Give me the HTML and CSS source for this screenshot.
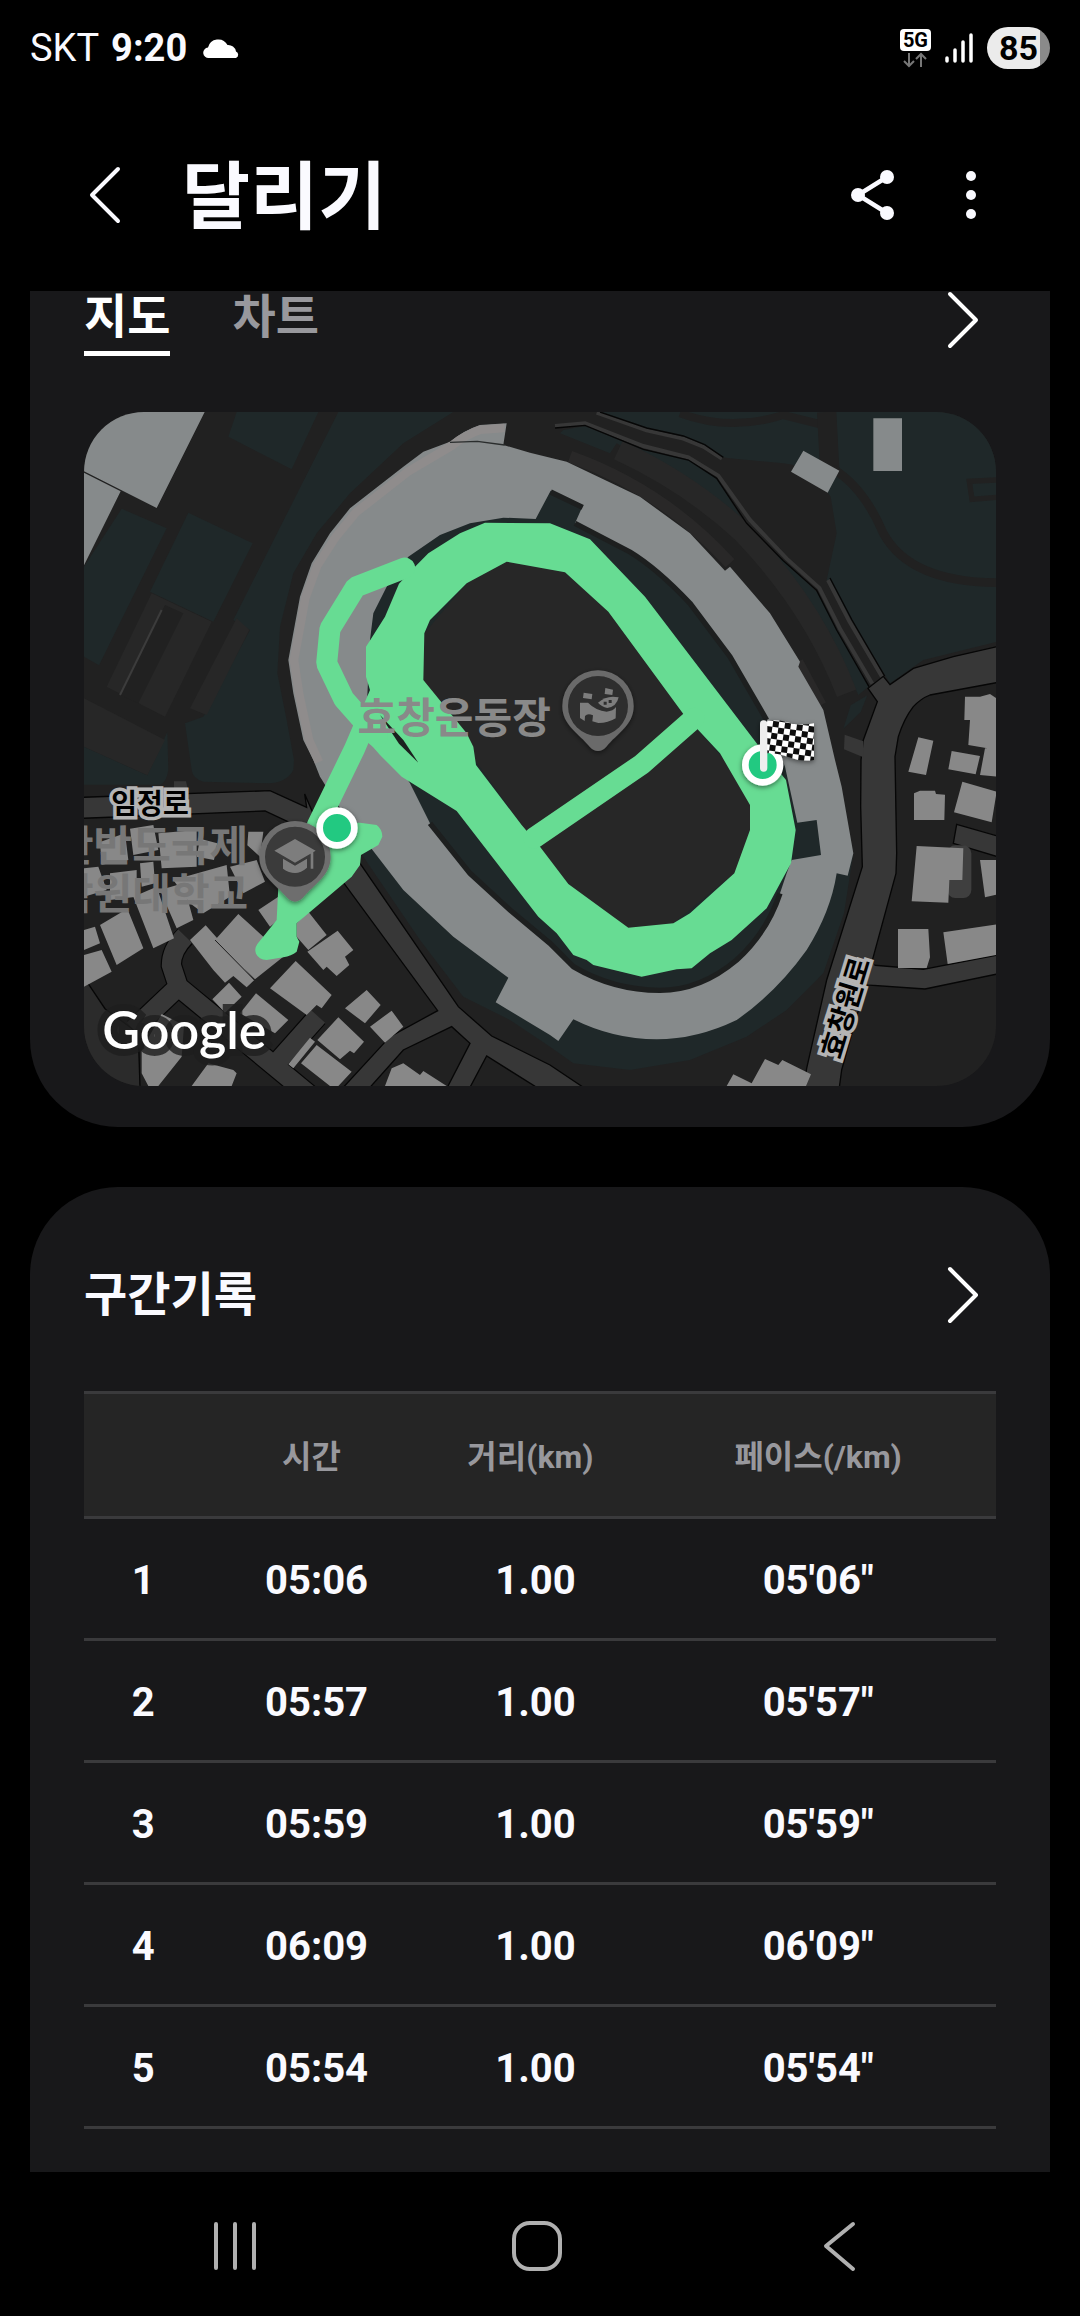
FILE: index.html
```html
<!DOCTYPE html>
<html lang="ko">
<head>
    <meta charset="UTF-8">
    <meta name="viewport" content="width=device-width, initial-scale=1.0">
    <title>달리기</title>
    <link rel="stylesheet" href="styles.css">
</head>
<body>
    <div class="status-bar">
        <span class="carrier">SKT</span>
        <span class="clock">9:20</span>
        <svg class="cloud" width="38" height="22" viewBox="0 0 38 22" fill="#fff"><path d="M6 21a5 5 0 0 1-1-10.500A10.500 10.500 0 0 1 24.500 8a8 8 0 0 1 8.500 6.500A3.500 3.500 0 0 1 33 21z"/></svg>
        <div class="status-icons">
            <div class="network">
                <span class="network-label">5G</span>
                <svg width="24" height="16" viewBox="0 0 24 16" fill="none" stroke="#777" stroke-width="2"><path d="M6 1v13M1 9l5 5 5-5M18 15V2M13 7l5-5 5 5"/></svg>
            </div>
            <svg class="signal" width="28" height="30" viewBox="0 0 28 30" stroke="#fff" stroke-width="3.500" stroke-linecap="round"><path d="M2 25v3M10 17v11M18 9v19M26 2v26"/></svg>
            <span class="battery">85</span>
        </div>
    </div>

    <header>
        <button class="icon-btn back-btn" aria-label="뒤로">
            <svg width="34" height="60" viewBox="0 0 34 60" fill="none" stroke="#fafaff" stroke-width="4" stroke-linecap="round" stroke-linejoin="round"><path d="M30 4L4 30l26 26"/></svg>
        </button>
        <h1>달리기</h1>
        <button class="icon-btn" aria-label="공유">
            <svg width="48" height="54" viewBox="0 0 48 54" fill="#fafaff"><path d="M38 9L9 27l29 18" fill="none" stroke="#fafaff" stroke-width="4.500"/><circle cx="9" cy="27" r="7"/><circle cx="38" cy="9" r="7"/><circle cx="38" cy="45" r="7"/></svg>
        </button>
        <button class="icon-btn more-btn" aria-label="더보기">
            <svg width="12" height="50" viewBox="0 0 12 50" fill="#fafaff"><circle cx="6" cy="6" r="5"/><circle cx="6" cy="25" r="5"/><circle cx="6" cy="44" r="5"/></svg>
        </button>
    </header>

    <main>
        <section class="card map-card">
            <div class="card-head tabs-head">
                <nav class="tabs">
                    <button class="tab active">지도</button>
                    <button class="tab">차트</button>
                </nav>
                <a class="chevron" href="#map" aria-label="지도 보기">
                    <svg width="32" height="58" viewBox="0 0 32 58"><path d="M3 3l26 26L3 55"/></svg>
                </a>
            </div>

            <div class="map" id="map">
                <svg class="map-drawing" viewBox="0 0 2736 2022">
                    <defs>
                        <pattern id="checker" width="36" height="36" patternUnits="userSpaceOnUse" patternTransform="translate(2050 924) rotate(8)">
                            <rect width="36" height="36" fill="#fff"/>
                            <path d="M18 0h18v18H18zM0 18h18v18H0z" fill="#111"/>
                        </pattern>
                        <filter id="shadow" x="-30%" y="-30%" width="160%" height="160%"><feDropShadow dx="0" dy="5" stdDeviation="8" flood-color="#000" flood-opacity=".5"/></filter>
                    </defs>

                    <!-- parks -->
                    <g fill="#1f2829">
                        <path d="M0 464L113 290 248 349 45 760 0 734zM313 302L506 394 388 629 198 539zM458 0H703L623 172 433 74z"/>
                        <path d="M763 0H1108L958 94 798 244 698 364 628 484 588 644 580 784 608 924 630 1044 628 1074Q610 1110 558 1114L358 1109Q326 1100 323 1074L303 934 358 914 498 654 448 624z"/>
                        <path d="M0 1004L190 1090 250 960 253 1074Q248 1110 228 1118H0z"/>
                        <path d="M1548 0H2736V690L2518 744 2418 814 2228 504 2258 364 2240 254Q2180 160 2098 154L1938 139 1908 134 1798 74 1678 49z"/>
                        <path d="M1438 54L1503 42 1678 112 1813 144 1898 199 1988 344 2198 539 2353 824 2323 849 2238 664 2138 524 1988 354 1838 234 1598 94 1578 124 1428 64z"/>
                        <path d="M2238 984L2308 1324 2280 1504 2218 1684 2108 1794 1988 1874 1818 1944 1638 1974 1468 1954 1398 1904 1278 1824 1138 1754 1008 1584 838 1334 700 1000 1500 300z"/>
                        <path d="M2278 950L2300 880 2350 850 2330 900z"/>
                    </g>
                    <g fill="none" stroke="#212121">
                        <path d="M1788 4Q1938 60 2098 9L2218 39" stroke-width="24"/>
                        <path d="M2228 0L2238 190" stroke-width="58"/>
                        <path d="M2246 170Q2338 224 2398 364 2478 510 2738 512" stroke-width="26"/>
                        <path d="M2738 204L2656 208 2664 262 2738 256" stroke-width="16"/>
                    </g>

                    <!-- courts and embankments -->
                    <g fill="#272727">
                        <path d="M203 544L383 629 243 914 68 824zM458 619L496 654 368 909 318 889zM0 859L243 984 190 1090 0 1004z"/>
                        <path d="M243 579L298 604 163 874 108 849z" fill="#212121"/>
                        <path d="M233 594L108 849" stroke="#3c3c3c" stroke-width="6"/>
                        <path d="M1603 114Q1818 214 1978 364 2188 584 2288 844" fill="none" stroke="#272727" stroke-width="62"/>
                        <path d="M1458 134Q1738 234 1938 454M2140 750L2210 880" fill="none" stroke="#292828" stroke-width="36"/>
                    </g>

                    <!-- footpath -->
                    <g fill="none" stroke-width="12" stroke="#373737">
                        <path d="M1413 42L1503 34 1678 102 1813 136 1903 191 1998 324 2108 440 2206 528 2268 650 2365 815"/>
                        <path d="M1538 2L1688 55 1798 80 1858 104 1914 140M2232 504L2296 628 2394 794"/>
                    </g>
                    <g fill="none" stroke-width="4" stroke="#060606">
                        <path d="M1413 48L1503 40 1678 112 1813 144 1898 199 1988 334 2098 446 2198 535 2258 654 2355 824"/>
                        <path d="M1548 0L1688 48 1798 72 1862 98 1918 136M2238 498L2304 624 2402 792"/>
                    </g>

                    <!-- roads -->
                    <g fill="#373737" stroke="#060606" stroke-width="4">
                        <path d="M2738 704L2608 734 2488 769 2418 818 2398 793 2352 829 2380 869 2338 984 2331 1044 2330 1184 2335 1364 2228 1704 2168 1969 2158 2026H2266L2273 1974 2368 1634 2436 1384 2438 1324 2433 1034 2443 974Q2460 920 2488 884 2510 860 2538 849L2738 812z"/>
                        <path d="M2618 1237L2740 1272V1334L2608 1294zM2364 1659L2518 1672 2740 1629V1686L2523 1731 2348 1719z"/>
                        <path d="M-4 1156L558 1136 668 1186 662 1146 720 1280 543 1197-4 1219z"/>
                        <path d="M758 1384L828 1354 1123 1784 1223 1872 1398 1959 1498 2026H1358L1208 1932 1158 2026H1090L1158 1894 1103 1844 958 1914 858 2026H778L918 1874 1061 1796z"/>
                        <path d="M-4 1690L63 1790 163 1864 168 2026H-4z" fill="#2b2b2b"/>
                    </g>
                    <path d="M2282 968L2338 988V1036L2280 1012zM270 1108h36l8 36h-44z" fill="#373737"/>
                    <path d="M303 1574Q262 1614 262 1660L283 1724 150 1850M283 1724L690 2060M700 1815L580 1950" fill="none" stroke="#060606" stroke-width="64"/>
                    <path d="M303 1572Q262 1614 262 1660L283 1724 148 1852M283 1724L690 2060M702 1813L580 1950" fill="none" stroke="#373737" stroke-width="57"/>
                    <path d="M2357 1640L2372 1661V1717L2345 1717z" fill="#373737"/>

                    <!-- buildings -->
                    <path d="M0 0H362L218 288 0 178zM0 182L110 238 0 460z" fill="#868a8b"/>
                    <path d="M2368 19h86v158h-86zM2158 116L2266 176 2231 242 2121 179z" fill="#868a8b"/>
                    <rect x="2590" y="1300" width="72" height="158" rx="24" fill="#3f3f3f"/>
                    <g fill="#888">
                        <path d="M2643 854L2688 854 2718 846 2738 859V1009L2728 1012 2653 999 2658 924 2641 924zM2503 976L2548 986 2526 1089 2473 1079zM2603 1017L2688 1032 2675 1087 2593 1072zM2703 1009H2738V1094L2688 1089z"/>
                        <path d="M2508 1136H2553L2556 1146 2583 1148 2581 1224H2490V1144zM2635 1109L2738 1139 2723 1231 2610 1201zM2498 1302L2638 1309 2635 1404H2596L2593 1472 2483 1468zM2688 1344H2738V1448L2703 1456z"/>
                        <path d="M2442 1551H2533L2538 1636 2528 1668H2442zM2578 1561L2738 1537V1629L2591 1656zM2043 1941L2083 1959 2095 1944 2181 1987 2166 2022H1928L1948 1987 2003 2014z"/>
                        <path d="M463 1506L538 1574 598 1634 513 1702 393 1584zM365 1540L511 1704 488 1726 448 1692 423 1712 388 1674 318 1584zM523 1494L583 1454V1524L558 1544zM673 1499L728 1569 673 1614 638 1574V1534z"/>
                        <path d="M761 1556L808 1614 783 1634 796 1659 758 1692 728 1664 718 1674 670 1619zM635 1647L743 1749 713 1789 698 1779 668 1809 558 1729zM435 1712L473 1754 423 1802 385 1762zM516 1744L613 1824 573 1864 468 1804z"/>
                        <path d="M848 1734L890 1779 843 1834 783 1789zM923 1796L958 1844 903 1892 858 1844zM763 1816L840 1889 810 1924 798 1916 768 1942 700 1884zM698 1899L803 1979 763 2022H738L651 1954zM678 1877L693 1889 628 1969 613 1957z"/>
                        <path d="M923 1969L958 1954 1008 1989 1018 1977 1088 2022H903zM373 1954L448 1974 458 1984 443 2022H323zM173 1914L233 1806 300 1840 293 1934 223 2022H193L173 1984z"/>
                        <path d="M0 1554L33 1544 48 1594 0 1614zM0 1629L53 1614 83 1679 0 1724zM48 1539L130 1490 178 1609 98 1659zM148 1454L218 1424 270 1579 208 1609zM228 1434L298 1414 328 1524 278 1549z"/>
                        <path d="M48 1290L123 1264 133 1344 53 1358zM138 1250L208 1239 223 1314 148 1329zM223 1264L338 1254V1364L233 1369zM0 1369L43 1364 68 1434 0 1454zM78 1384L158 1374V1454L78 1464zM168 1354L208 1349 213 1414 173 1424z"/>
                        <path d="M268 1404L428 1359 438 1454 358 1504 318 1474zM438 1364L518 1344 543 1409 478 1444zM493 1259H538L528 1334 490 1300zM348 1280L400 1294 390 1344 338 1334z"/>
                    </g>
                    <path d="M393 1584L511 1704" stroke="#1c1c1c" stroke-width="3"/>

                    <!-- stadium stands -->
                    <path d="M1268 34L1188 39Q1140 55 1098 89L1018 119 958 164 798 289 738 364 683 454 648 554 613 744 628 844 658 984 688 1044 708 1094 758 1174 858 1304 958 1434 1108 1574 1273 1697 1235 1771 1398 1869 1423 1887 1468 1822Q1588 1882 1718 1882 1838 1882 1958 1824 2078 1740 2168 1614 2240 1500 2258 1384L2291 1391 2308 1324 2273 1124 2253 1044 2218 894 2143 764 2148 749 2058 604 1938 464 1923 476 1818 364 1668 254 1448 149 1338 122 1258 99z" fill="#868a8b"/>
                    <path d="M1262 48L1190 53Q1145 68 1105 100L970 180 815 302 755 375 700 460 664 558 630 744 645 844 675 984 705 1050" fill="none" stroke="#8f8c8c" stroke-width="26"/>
                    <path d="M1098 91L1180 88 1262 99" fill="none" stroke="#2a2d2d" stroke-width="4"/>
                    <path d="M1355 321L1258 317 1158 334 1068 369 973 434 908 524 868 604 858 684 850 850 900 1000 978 1114 1038 1234 1158 1384 1278 1494 1398 1594 1468 1664Q1588 1739 1728 1739 1850 1739 1958 1644 2050 1560 2088 1444L2108 1384 2123 1344 2211 1329 2198 1224 2140 1232 2103 1064 2048 924 1938 734 1818 574Q1700 450 1638 424L1473 334 1496 282 1400 236z" fill="#1f2829"/>
                    <path d="M1473 334L1638 420Q1720 470 1818 574L1938 734 2048 924M1038 1234L1158 1384 1278 1494 1398 1594 1468 1664Q1588 1735 1728 1735 1850 1735 1958 1644 2050 1560 2088 1444M1400 240L1496 286" fill="none" stroke="#1d1f1f" stroke-width="16"/>
                    <path d="M1268 449L1443 481 1573 599 1798 906 1921 1044 2010 1179V1254L1951 1384 1768 1534 1633 1560 1453 1416 1313 1239 1000 804 1021 664 1148 514z" fill="#272727"/>

                    <!-- running route -->
                    <g fill="#67dc93">
                        <path fill-rule="evenodd" d="M1203 332L1398 334 1518 382 1683 554 2018 994 2106 1104 2135 1254 2121 1354 2048 1489 1943 1584 1878 1624 1823 1669 1778 1672 1673 1694 1528 1659 1508 1644 1468 1629 1418 1564 1363 1514 1118 1197 953 1094 888 1029 853 989 830 900 858 834 846 794V704L903 614 945 515 993 464 1033 424 1128 364zM1268 449L1148 514 1068 594 1038 624 1021 664 1018 804 1148 964 1168 1004 1176 1059 1313 1239 1368 1304 1453 1416 1633 1547 1768 1534 1818 1504 1951 1384 1998 1254V1179L1908 1024 1798 906 1573 599 1443 481z"/>
                        <path d="M668 1234L828 1232 878 1239Q895 1252 895 1274L883 1299 831 1329 828 1359 803 1394 638 1534V1574L646 1589 638 1619Q622 1632 598 1636L548 1644Q524 1642 516 1625 510 1612 520 1596L578 1524 583 1424 600 1350z"/>
                        <g fill="none" stroke="#67dc93" stroke-width="63" stroke-linecap="round" stroke-linejoin="bevel">
                            <path d="M1830 919L1673 1057 1350 1278"/>
                            <path d="M962 468L815 525 738 650 728 754 780 862 880 975M846 930L812 1010 700 1240"/>
                        </g>
                    </g>
                    <path d="M888 909L958 984 1003 1052 945 995z" fill="#1b211f"/>

                    <!-- place pins -->
                    <g filter="url(#shadow)">
                        <path d="M1542 775a107 107 0 0 1 107 107c0 58-50 82-82 122q-25 26-50 0c-32-40-82-64-82-122a107 107 0 0 1 107-107z" fill="#6b6b6b"/>
                        <circle cx="1542" cy="882" r="90" fill="#2e2e2e"/>
                        <g fill="#7d7d7d">
                            <path d="M1499 842l26 4-2 16-26-4zM1564 828l23 5-2 16-23-3zM1488 872h24q24 24 56 27 20-2 28-14l-1 34q-22 14-52 14l-18-5 2-18q-16-8-24 2l-1 15-14-9z"/>
                            <path d="M1542 872q26-24 62-16-6 28-34 32-18-4-28-16z"/>
                        </g>
                        <path d="M1559 869h9v9h-9zM1574 864h9v9h-9z" fill="#2e2e2e"/>
                    </g>
                    <g filter="url(#shadow)">
                        <path d="M633 1227a107 107 0 0 1 107 107c0 58-50 82-82 122q-25 26-50 0c-32-40-82-64-82-122a107 107 0 0 1 107-107z" fill="#6e6e6e"/>
                        <circle cx="633" cy="1334" r="90" fill="#3a3a3a"/>
                        <path d="M633 1281L695 1316 633 1352 571 1316zM597 1340L633 1361 669 1340V1367Q651 1383 633 1383 615 1383 597 1370zM680 1320h8v50h-8z" fill="#7d7d7d"/>
                    </g>

                    <!-- start and finish -->
                    <g filter="url(#shadow)">
                        <circle cx="759" cy="1248" r="52" fill="#24c981" stroke="#fff" stroke-width="20"/>
                        <circle cx="2036" cy="1059" r="52" fill="#24c981" stroke="#fff" stroke-width="20"/>
                        <path d="M2048 926Q2080 922 2115 932T2190 934V1044Q2150 1050 2115 1036T2048 1024z" fill="url(#checker)"/>
                        <path d="M2039 936v132" stroke="#eee" stroke-width="22" stroke-linecap="round"/>
                    </g>
                </svg>
                <span class="label place stadium-label">효창운동장</span>
                <span class="label place school-label">한반도국제<br>대학원대학교</span>
                <span class="label road west-road">임정로</span>
                <span class="label road east-road">효창원로</span>
                <span class="label google">Google</span>
            </div>
        </section>

        <section class="card splits-card">
            <div class="card-head">
                <h2>구간기록</h2>
                <a class="chevron" href="#splits" aria-label="구간기록 보기">
                    <svg width="32" height="58" viewBox="0 0 32 58"><path d="M3 3l26 26L3 55"/></svg>
                </a>
            </div>
            <table id="splits">
                <thead>
                    <tr><th class="col-no"></th><th class="col-time">시간</th><th class="col-dist">거리(km)</th><th class="col-pace">페이스(/km)</th></tr>
                </thead>
                <tbody>
                    <tr><td>1</td><td>05:06</td><td>1.00</td><td>05'06"</td></tr>
                    <tr><td>2</td><td>05:57</td><td>1.00</td><td>05'57"</td></tr>
                    <tr><td>3</td><td>05:59</td><td>1.00</td><td>05'59"</td></tr>
                    <tr><td>4</td><td>06:09</td><td>1.00</td><td>06'09"</td></tr>
                    <tr><td>5</td><td>05:54</td><td>1.00</td><td>05'54"</td></tr>
                </tbody>
            </table>
        </section>
    </main>

    <footer>
        <button class="icon-btn" aria-label="최근 앱">
            <svg width="60" height="60" viewBox="0 0 60 60"><path d="M11 8v44M30 8v44M49 8v44"/></svg>
        </button>
        <button class="icon-btn" aria-label="홈">
            <svg width="60" height="60" viewBox="0 0 60 60"><rect x="7" y="7" width="46" height="46" rx="16"/></svg>
        </button>
        <button class="icon-btn" aria-label="뒤로">
            <svg width="60" height="60" viewBox="0 0 60 60"><path d="M44 8L17 30l27 23"/></svg>
        </button>
    </footer>
</body>
</html>
```

FILE: styles.css
```css
* {
    margin: 0;
    padding: 0;
    box-sizing: border-box;
}
body {
    font-family: Roboto, 'Noto Sans CJK KR', sans-serif;
    background: #000;
    color: #fafaff;
    min-height: 100vh;
    display: flex;
    flex-direction: column;
}
button { background: none; border: none; font: inherit; color: inherit; cursor: pointer; }
svg { display: block; }

/* Status bar */
.status-bar { display: flex; align-items: center; height: 96px; padding: 0 30px; }
.carrier { font-size: 38px; font-weight: 400; margin-right: 12px; }
.clock { font-size: 38px; font-weight: 700; margin-right: 16px; }
.status-icons { display: flex; align-items: center; gap: 14px; margin-left: auto; }
.network { display: flex; flex-direction: column; align-items: center; gap: 1px; }
.network-label { background: #fff; color: #000; font-size: 20px; line-height: 22px; font-weight: 700; padding: 0 3px; border-radius: 4px; }
.battery { width: 63px; height: 42px; border-radius: 21px; background: linear-gradient(90deg, #ebebeb 84%, #8a8a8a 84%); color: #000; font-size: 34px; line-height: 42px; font-weight: 700; text-align: center; }

/* App header */
header { display: flex; align-items: center; height: 195px; padding: 2px 103px 0 88px; }
header h1 { flex: 1; font-size: 74px; line-height: 96px; font-weight: 700; padding-top: 6px; }
.back-btn { margin-right: 60px; }
.more-btn { margin-left: 68px; }

/* Cards */
main { flex: 1; display: flex; flex-direction: column; gap: 60px; padding: 0 30px; }
.card { background: #18181a; padding: 0 54px; }
.map-card { border-radius: 0 0 88px 88px; padding-bottom: 41px; }
.splits-card { flex: 1; border-radius: 88px 88px 0 0; padding-bottom: 43px; }
.card-head { display: flex; justify-content: space-between; align-items: center; height: 204px; padding: 12px 17px 0 0; }
.card-head h2 { font-size: 47px; line-height: 60px; font-weight: 700; }
.tabs-head { height: 121px; padding-top: 0; align-items: flex-start; }
.tabs { display: flex; gap: 62px; }
.tab { display: flex; height: 65px; font-size: 47px; line-height: 52px; font-weight: 700; color: #98989d; }
.tab.active { color: #fff; border-bottom: 5px solid #fff; }
.chevron svg { fill: none; stroke: #fff; stroke-width: 4; stroke-linecap: round; stroke-linejoin: round; }

/* Map */
.map { position: relative; overflow: hidden; border-radius: 60px; background: #212121; }
.map-drawing { width: 100%; height: auto; }
.label { position: absolute; white-space: nowrap; }
.place { font-size: 42px; line-height: 48px; font-weight: 700; color: #898989; }
.stadium-label { left: 30%; top: 42%; }
.school-label { right: 82%; top: 61%; text-align: right; color: #777; }
.road { font-size: 28px; line-height: 32px; font-weight: 700; color: #000; -webkit-text-stroke: 7px #b4b4b4; paint-order: stroke fill; }
.west-road { left: 3%; top: 56%; }
.east-road { left: 78%; top: 86%; transform: rotate(-73deg); }
.google { left: 2%; bottom: 4%; font-family: Lato, sans-serif; font-size: 52px; line-height: 60px; font-weight: 600; color: #fff; -webkit-text-stroke: 14px rgba(30, 30, 30, .8); paint-order: stroke fill; }

/* Split table */
table { width: 100%; table-layout: fixed; border-collapse: collapse; text-align: center; }
th { height: 125px; background: #252525; color: #98989d; font-size: 32px; font-weight: 700; padding: 0 10px 3px 0; }
td { height: 122px; font-size: 40px; font-weight: 700; padding-top: 4px; }
tr { border-bottom: 3px solid #3a3a3c; }
thead tr { border-top: 3px solid #3a3a3c; }
.col-no { width: 13%; }
.col-time { width: 25%; }
.col-dist { width: 23%; }
.col-pace { width: 39%; padding-right: 0; }

/* Navigation bar */
footer { display: flex; justify-content: space-between; align-items: center; height: 144px; padding: 4px 211px 0 205px; }
footer svg { fill: none; stroke: #b0b0b0; stroke-width: 4; stroke-linecap: round; stroke-linejoin: round; }
```
